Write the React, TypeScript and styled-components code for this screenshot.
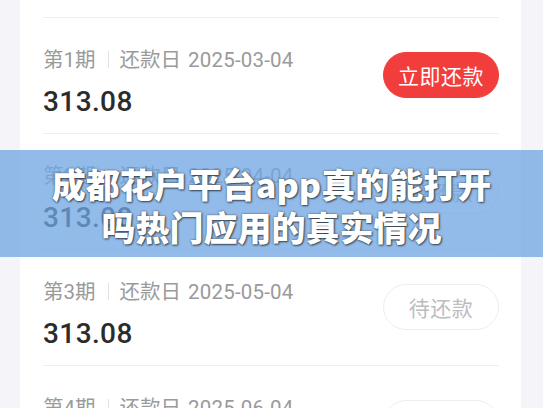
import styled, { createGlobalStyle } from 'styled-components';

const GlobalStyle = createGlobalStyle`
  html, body {
    margin: 0;
    padding: 0;
    background: #f4f4f9;
    overflow: hidden;
  }
  body {
    font-family: Roboto, "Noto Sans CJK SC", sans-serif;
  }
`;

const Page = styled.div`
  position: relative;
  width: 543px;
  height: 408px;
  overflow: hidden;
  background: #f4f4f9;
`;

const Card = styled.div`
  margin: -98px 22px 0 20px;
  padding: 0 22px 0 23px;
  background: #ffffff;
`;

const Row = styled.div`
  display: flex;
  align-items: center;
  justify-content: space-between;
  height: 115px;
  border-bottom: 1px solid #efeff2;
`;

const Info = styled.div`
  display: flex;
  flex-direction: column;
  gap: 10px;
  padding-top: 14px;
`;

const Meta = styled.div`
  display: flex;
  align-items: center;
  font-size: 20.5px;
  line-height: 28px;
  color: #9a9a9a;
`;

const Divider = styled.span`
  width: 1px;
  height: 17px;
  margin: 0 11px 0 12px;
  background: #e2e2e2;
`;

const DueDate = styled.span`
  margin-left: 7px;
  letter-spacing: 0.2px;
`;

const Amount = styled.div`
  font-size: 28px;
  line-height: 36px;
  font-weight: 500;
  color: #2b2b2b;
  letter-spacing: 0.4px;
`;

const PayButton = styled.button<{ $active: boolean }>`
  width: 116px;
  height: 46px;
  margin-top: -2px;
  border-radius: 23px;
  font-family: "Noto Sans CJK SC", sans-serif;
  font-size: 21px;
  letter-spacing: 0.5px;
  cursor: pointer;
  border: 1px solid ${(p) => (p.$active ? '#f23d3d' : '#ededed')};
  background: ${(p) => (p.$active ? '#f23d3d' : '#ffffff')};
  color: ${(p) => (p.$active ? '#ffffff' : '#bdbdbd')};
`;

const Banner = styled.div`
  position: absolute;
  left: 0;
  right: 0;
  top: 150px;
  height: 107px;
  display: flex;
  align-items: center;
  justify-content: center;
  background: rgba(112, 166, 226, 0.76);
`;

const Title = styled.h1`
  margin: 0;
  padding-top: 2px;
  text-align: center;
  font-family: "Noto Sans CJK SC", sans-serif;
  font-size: 34px;
  line-height: 43px;
  font-weight: 900;
  color: #ffffff;
  text-shadow: 0 0 2px rgba(40, 40, 40, 0.75), 1px 1px 2px rgba(0, 0, 0, 0.6);
`;

const rows = [
  { period: 0, date: '2025-02-04', active: false },
  { period: 1, date: '2025-03-04', active: true },
  { period: 2, date: '2025-04-04', active: false },
  { period: 3, date: '2025-05-04', active: false },
  { period: 4, date: '2025-06-04', active: false },
];

export default function App() {
  return (
    <Page>
      <GlobalStyle />
      <Card>
        {rows.map((r) => (
          <Row key={r.period}>
            <Info>
              <Meta>
                <span>第{r.period}期</span>
                <Divider />
                <span>还款日</span>
                <DueDate>{r.date}</DueDate>
              </Meta>
              <Amount>313.08</Amount>
            </Info>
            <PayButton $active={r.active}>{r.active ? '立即还款' : '待还款'}</PayButton>
          </Row>
        ))}
      </Card>
      <Banner>
        <Title>
          成都花户平台app真的能打开
          <br />
          吗热门应用的真实情况
        </Title>
      </Banner>
    </Page>
  );
}
